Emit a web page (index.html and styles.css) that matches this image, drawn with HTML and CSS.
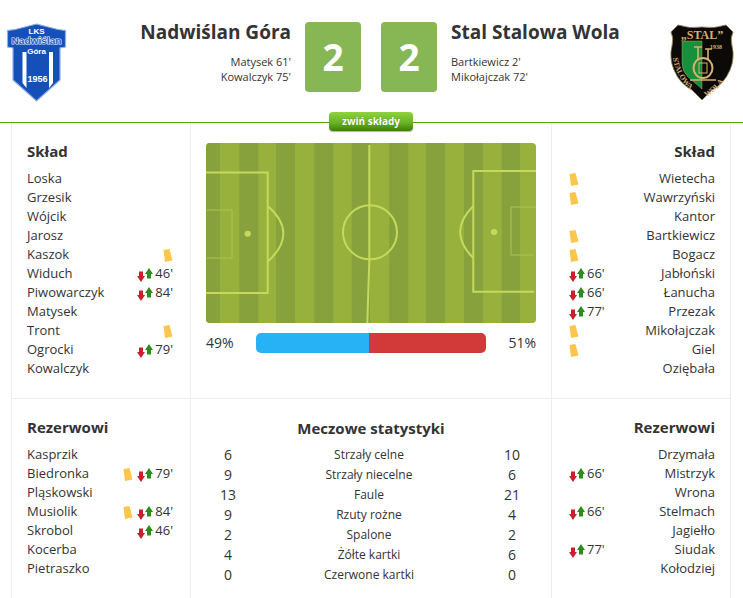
FILE: index.html
```html
<!DOCTYPE html>
<html lang="pl">
<head>
<meta charset="utf-8">
<title>Nadwiślan Góra - Stal Stalowa Wola</title>
<link rel="stylesheet" href="styles.css">
</head>
<body>
<svg class="defs" width="0" height="0" aria-hidden="true">
  <symbol id="sub" viewBox="0 0 16 14">
    <path fill="#c9202f" d="M2 3.500h4V8h2L4 14 0 8h2z"/>
    <path fill="#2c8c1e" d="M12 0l4 6h-2v4.500h-4V6H8z"/>
  </symbol>
  <symbol id="card" viewBox="0 0 10 13">
    <path fill="#fcc64c" d="M.5 1l6-1 3 11.500L2 13z"/>
  </symbol>
</svg>
<header class="match-head">
  <div class="team team-home">
    <svg class="crest-home" viewBox="0 0 61 79">
      <path fill="#1550b8" stroke="#8fb0ea" stroke-width="1.200" d="M30.500 1 52 6.500l7.500 1V24l-5.500 1v32L30.500 78 7 57V25l-5.500-1V7.500l7.500-1z"/>
      <path fill="#fff" d="M16.500 29H20.500v36l-4-5zM43 29h4v31l-4 5z"/>
      <text class="crest-txt" x="30.500" y="11" text-anchor="middle" font-size="8">LKS</text>
      <text class="crest-name" x="30.500" y="20.500" text-anchor="middle" font-size="9.500" textLength="50" lengthAdjust="spacingAndGlyphs">Nadwiślan</text>
      <text class="crest-txt" x="30.500" y="30.500" text-anchor="middle" font-size="8">Góra</text>
      <text class="crest-txt" x="31.500" y="58.500" text-anchor="middle" font-size="9">1956</text>
    </svg>
    <div class="team-info">
      <h1 class="team-name">Nadwiślan Góra</h1>
      <p class="scorer">Matysek 61'</p>
      <p class="scorer">Kowalczyk 75'</p>
    </div>
  </div>
  <div class="scores">
    <div class="score">2</div>
    <div class="score">2</div>
  </div>
  <div class="team team-away">
    <div class="team-info">
      <h1 class="team-name">Stal Stalowa Wola</h1>
      <p class="scorer">Bartkiewicz 2'</p>
      <p class="scorer">Mikołajczak 72'</p>
    </div>
    <svg class="crest-away" viewBox="0 0 64 77">
      <defs>
        <path id="arc-l" d="M3 34Q7 60 31 73"/>
        <path id="arc-r" d="M36 73Q56 62 61 38"/>
      </defs>
      <path fill="#0b0a08" stroke="#8a7446" stroke-width=".8" d="M8 1Q20 5 32 3 44 5 56 1l7 7q-3 6-1 14 3 12-2 24-6 14-18 20L32 76 22 66Q10 60 4 46-1 34 2 22 4 14 1 8z"/>
      <path fill="#16903a" stroke="#d8b06f" stroke-width=".4" d="M12 17h20v48L18 53q-6-6-6-14z"/>
      <g fill="none" stroke="#d8b06f">
        <ellipse cx="33" cy="44" rx="9.500" ry="10" stroke-width="2"/>
        <path stroke-width="1.600" d="M28 35V23M38 35V25M24 23h8M35 25h7M20 56h26"/>
        <rect x="29" y="39" width="8" height="10" stroke-width="1"/>
      </g>
      <text class="crest-stal" x="32" y="15" text-anchor="middle" font-size="12">„STAL”</text>
      <text class="crest-year" x="46" y="25" text-anchor="middle" font-size="6">1938</text>
      <text class="crest-year" font-size="7.500"><textPath href="#arc-l">STALOWA</textPath></text>
      <text class="crest-year" font-size="7.500"><textPath href="#arc-r">WOLA</textPath></text>
    </svg>
  </div>
  <button class="toggle" type="button">zwiń składy</button>
</header>

<main class="board">
  <section class="cell">
    <h2 class="cell-title">Skład</h2>
    <ul class="players">
      <li class="player"><span class="pname">Loska</span></li>
      <li class="player"><span class="pname">Grzesik</span></li>
      <li class="player"><span class="pname">Wójcik</span></li>
      <li class="player"><span class="pname">Jarosz</span></li>
      <li class="player"><span class="pname">Kaszok</span><svg class="ic-card"><use href="#card"/></svg></li>
      <li class="player"><span class="pname">Widuch</span><svg class="ic-sub"><use href="#sub"/></svg><span class="min">46'</span></li>
      <li class="player"><span class="pname">Piwowarczyk</span><svg class="ic-sub"><use href="#sub"/></svg><span class="min">84'</span></li>
      <li class="player"><span class="pname">Matysek</span></li>
      <li class="player"><span class="pname">Tront</span><svg class="ic-card"><use href="#card"/></svg></li>
      <li class="player"><span class="pname">Ogrocki</span><svg class="ic-sub"><use href="#sub"/></svg><span class="min">79'</span></li>
      <li class="player"><span class="pname">Kowalczyk</span></li>
    </ul>
  </section>

  <section class="cell cell-mid">
    <svg class="pitch" viewBox="0 0 330 180">
      <rect width="330" height="180" fill="#98b03c"/>
      <g fill="#87a23c">
        <rect x="0" width="14" height="180"/><rect x="33.300" width="19" height="180"/>
        <rect x="70" width="19" height="180"/><rect x="108.300" width="19" height="180"/>
        <rect x="145.700" width="18.300" height="180"/><rect x="183.300" width="19" height="180"/>
        <rect x="220" width="19" height="180"/><rect x="258" width="19" height="180"/>
        <rect x="295.700" width="18.300" height="180"/>
      </g>
      <g fill="none" stroke="#c5d95c" stroke-width="2">
        <path d="M0 29.500H61.700V150H0"/>
        <path d="M61.700 63Q93 90 61.700 118.700"/>
        <path d="M330 28H267.300V148.700H328"/>
        <path d="M267.300 63Q241 89 267.300 115"/>
        <circle cx="164" cy="89.300" r="27"/>
        <path d="M163.300 2V118L161.300 180"/>
      </g>
      <g fill="none" stroke="#adc44e" stroke-width="1">
        <path d="M0 67H26V115H0"/>
        <path d="M330 64H305V112H328"/>
      </g>
      <g fill="#c5d95c">
        <ellipse cx="41.700" cy="90.700" rx="3.200" ry="3"/>
        <ellipse cx="288" cy="89" rx="3.200" ry="3"/>
      </g>
    </svg>
    <div class="possession">
      <span class="pct">49%</span>
      <div class="bar"><div class="bar-home"></div><div class="bar-away"></div></div>
      <span class="pct">51%</span>
    </div>
  </section>

  <section class="cell cell-right">
    <h2 class="cell-title">Skład</h2>
    <ul class="players">
      <li class="player"><svg class="ic-card"><use href="#card"/></svg><span class="pname">Wietecha</span></li>
      <li class="player"><svg class="ic-card"><use href="#card"/></svg><span class="pname">Wawrzyński</span></li>
      <li class="player"><span class="pname">Kantor</span></li>
      <li class="player"><svg class="ic-card"><use href="#card"/></svg><span class="pname">Bartkiewicz</span></li>
      <li class="player"><svg class="ic-card"><use href="#card"/></svg><span class="pname">Bogacz</span></li>
      <li class="player"><svg class="ic-sub"><use href="#sub"/></svg><span class="min">66'</span><span class="pname">Jabłoński</span></li>
      <li class="player"><svg class="ic-sub"><use href="#sub"/></svg><span class="min">66'</span><span class="pname">Łanucha</span></li>
      <li class="player"><svg class="ic-sub"><use href="#sub"/></svg><span class="min">77'</span><span class="pname">Przezak</span></li>
      <li class="player"><svg class="ic-card"><use href="#card"/></svg><span class="pname">Mikołajczak</span></li>
      <li class="player"><svg class="ic-card"><use href="#card"/></svg><span class="pname">Giel</span></li>
      <li class="player"><span class="pname">Oziębała</span></li>
    </ul>
  </section>

  <section class="cell cell-low">
    <h2 class="cell-title">Rezerwowi</h2>
    <ul class="players">
      <li class="player"><span class="pname">Kasprzik</span></li>
      <li class="player"><span class="pname">Biedronka</span><svg class="ic-card"><use href="#card"/></svg><svg class="ic-sub"><use href="#sub"/></svg><span class="min">79'</span></li>
      <li class="player"><span class="pname">Pląskowski</span></li>
      <li class="player"><span class="pname">Musiolik</span><svg class="ic-card"><use href="#card"/></svg><svg class="ic-sub"><use href="#sub"/></svg><span class="min">84'</span></li>
      <li class="player"><span class="pname">Skrobol</span><svg class="ic-sub"><use href="#sub"/></svg><span class="min">46'</span></li>
      <li class="player"><span class="pname">Kocerba</span></li>
      <li class="player"><span class="pname">Pietraszko</span></li>
    </ul>
  </section>

  <section class="cell cell-mid cell-low">
    <h2 class="cell-title stats-title">Meczowe statystyki</h2>
    <div class="stats">
      <span class="val">6</span><span class="lbl">Strzały celne</span><span class="val">10</span>
      <span class="val">9</span><span class="lbl">Strzały niecelne</span><span class="val">6</span>
      <span class="val">13</span><span class="lbl">Faule</span><span class="val">21</span>
      <span class="val">9</span><span class="lbl">Rzuty rożne</span><span class="val">4</span>
      <span class="val">2</span><span class="lbl">Spalone</span><span class="val">2</span>
      <span class="val">4</span><span class="lbl">Żółte kartki</span><span class="val">6</span>
      <span class="val">0</span><span class="lbl">Czerwone kartki</span><span class="val">0</span>
    </div>
  </section>

  <section class="cell cell-right cell-low">
    <h2 class="cell-title">Rezerwowi</h2>
    <ul class="players">
      <li class="player"><span class="pname">Drzymała</span></li>
      <li class="player"><svg class="ic-sub"><use href="#sub"/></svg><span class="min">66'</span><span class="pname">Mistrzyk</span></li>
      <li class="player"><span class="pname">Wrona</span></li>
      <li class="player"><svg class="ic-sub"><use href="#sub"/></svg><span class="min">66'</span><span class="pname">Stelmach</span></li>
      <li class="player"><span class="pname">Jagiełło</span></li>
      <li class="player"><svg class="ic-sub"><use href="#sub"/></svg><span class="min">77'</span><span class="pname">Siudak</span></li>
      <li class="player"><span class="pname">Kołodziej</span></li>
    </ul>
  </section>
</main>
</body>
</html>
```
FILE: styles.css
```css
* { box-sizing: border-box; }
html, body { margin: 0; padding: 0; }
body {
  width: 743px;
  height: 598px;
  overflow: hidden;
  background: #fff;
  color: #333;
  font-family: "Open Sans", "Liberation Sans", sans-serif;
  font-size: 13px;
}
.defs { display: block; height: 0; }

.match-head {
  position: relative;
  display: flex;
  align-items: flex-start;
  height: 123px;
  padding-top: 22px;
  border-bottom: 1px solid #5b9e12;
}
.team { display: flex; align-items: flex-start; }
.team-home { width: 291px; padding-left: 6px; justify-content: space-between; }
.team-away { flex: 1; justify-content: space-between; padding-right: 9px; }
.team-home .team-info { text-align: right; }
.team-name {
  margin: -3px 0 9px;
  font-size: 19px;
  line-height: 26px;
  font-weight: 700;
  color: #333;
  white-space: nowrap;
}
.scorer { margin: 0; font-size: 11px; line-height: 15px; color: #333; white-space: nowrap; }
.crest-home { width: 61px; height: 79px; margin-top: 1px; flex: none; }
.crest-away { width: 64px; height: 77px; margin-top: 2px; flex: none; }
.crest-txt { font-family: "Liberation Sans", sans-serif; font-weight: 700; fill: #fff; }
.crest-name {
  font-family: "Liberation Sans", sans-serif;
  font-weight: 700;
  fill: #2a5cc0;
  stroke: #e4edff;
  stroke-width: 1.200px;
  paint-order: stroke;
}
.crest-stal { font-family: "Liberation Serif", serif; font-weight: 700; fill: #d8b06f; }
.crest-year { font-family: "Liberation Serif", serif; font-weight: 700; fill: #d8b06f; }

.scores { display: flex; gap: 20px; margin: 0 14px; }
.score {
  width: 56px;
  height: 70px;
  border-radius: 4px;
  background: #87b755;
  color: #fff;
  font-size: 37px;
  font-weight: 700;
  line-height: 70px;
  text-align: center;
}
.toggle {
  position: absolute;
  left: 329px;
  top: 112px;
  width: 84px;
  height: 19px;
  padding: 0;
  border: 0;
  border-radius: 4px;
  background: linear-gradient(#8fd23e, #6ab526 55%, #3a7f08);
  box-shadow: 0 1px 1px rgba(0,0,0,.3);
  color: #fff;
  font-family: "Open Sans", sans-serif;
  font-size: 10px;
  font-weight: 700;
  line-height: 19px;
  text-shadow: 0 0 1px rgba(40,90,0,.6);
}

.board {
  display: grid;
  grid-template-columns: 179px 361px 178px;
  grid-template-rows: 276px 1fr;
  width: 720px;
  height: 475px;
  margin-left: 11px;
  border-left: 1px solid #eee;
  border-right: 1px solid #eee;
}
.cell {
  padding: 18px 17px 0 15px;
  border-right: 1px solid #eee;
  border-bottom: 1px solid #eee;
}
.cell-right { border-right: 0; padding-right: 15px; }
.cell-low { border-bottom: 0; padding-top: 18px; }
.cell-title {
  margin: 0 0 8px;
  font-size: 15px;
  line-height: 20px;
  font-weight: 700;
  color: #333;
}
.cell-right .cell-title { text-align: right; }
.players { list-style: none; margin: 0; padding: 0; }
.player {
  display: flex;
  align-items: center;
  height: 19px;
  line-height: 19px;
  white-space: nowrap;
}
.pname { margin-right: auto; }
.cell-right .pname { margin-left: auto; margin-right: 0; }
.min { margin-left: 2px; }
.ic-card { width: 10px; height: 13px; flex: none; margin-top: 2px; }
.ic-card + .ic-sub { margin-left: 4px; }
.ic-sub { width: 16px; height: 14px; flex: none; margin-top: 2px; }
.cell-right .ic-card { margin-left: 2px; }
.cell-right .ic-sub { margin-left: 2px; }

.cell-mid { padding: 20px 15px 0; }
.pitch { display: block; width: 330px; height: 180px; border-radius: 4px; }
.possession {
  display: flex;
  align-items: center;
  justify-content: space-between;
  margin-top: 10px;
  font-size: 14px;
}
.pct { line-height: 20px; }
.bar { display: flex; width: 230px; height: 20px; border-radius: 5px; overflow: hidden; }
.bar-home { width: 49%; background: #26b2f4; }
.bar-away { flex: 1; background: #d23a3a; }

.cell-mid.cell-low { padding-top: 19px; }
.cell-low .stats-title { text-align: center; margin-bottom: 7px; }
.stats {
  display: grid;
  grid-template-columns: 44px 1fr 48px;
  grid-auto-rows: 20px;
  line-height: 20px;
  text-align: center;
}
.val { font-size: 14px; }
.lbl { font-size: 12px; }
```
